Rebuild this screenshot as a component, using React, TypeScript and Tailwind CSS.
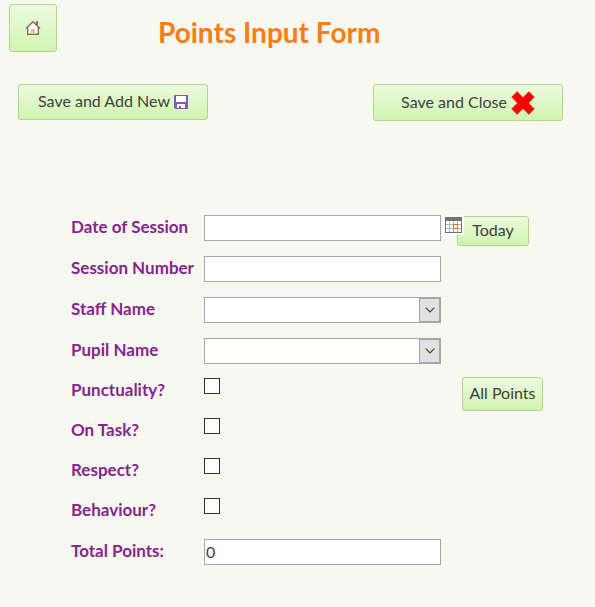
import { useState } from 'react';
import type { ReactNode } from 'react';

const buttonStyle =
  'flex shrink-0 items-center justify-center rounded-[3px] border border-[#acd888] bg-linear-to-b from-[#ecfadf] to-[#d0f4af] text-base leading-5 text-[#404040]';
const boxStyle =
  'h-[26px] w-[237px] shrink-0 border border-[#a6a6a6] bg-white text-base leading-5 text-[#404040] outline-none';

function HomeIcon() {
  return (
    <svg width="16" height="16" viewBox="0 0 16 16" aria-hidden="true">
      <path d="M11 1h2v4h-2z" fill="#d65532" />
      <path d="M3 7.5 8 2.5l5 5V14H3z" fill="#fff" />
      <path d="M1 8.5 8 1.8l7 6.7M2.7 7.5v6.8h10.6V7.5" fill="none" stroke="#737373" strokeWidth="1.4" />
      <path d="M6 9h4v5H6z" fill="#eac282" />
    </svg>
  );
}

function DiskIcon() {
  return (
    <svg width="14" height="14" viewBox="0 0 14 14" shapeRendering="crispEdges" aria-hidden="true">
      <path d="M0 0h14v14H1l-1-1z" fill="#8a57b0" />
      <path d="M2 1h10v6H2zM3 9h8v4H7v-2H5v2H3z" fill="#fff" />
    </svg>
  );
}

function CrossIcon() {
  return (
    <svg width="24" height="24" viewBox="0 0 24 24" aria-hidden="true">
      <path
        d="M6.2.6 12 6.5 17.8.6l5.6 5.5-5.8 5.9 5.8 5.9-5.6 5.5-5.8-5.9-5.8 5.9-5.6-5.5L6.4 12 .6 6.1z"
        fill="#f00"
        stroke="#c83a20"
        strokeWidth=".5"
      />
    </svg>
  );
}

function CalendarIcon() {
  return (
    <svg width="17" height="16" viewBox="0 0 17 16" shapeRendering="crispEdges" aria-hidden="true">
      <rect width="17" height="16" fill="#737373" />
      <rect x="1" y="4" width="15" height="11" fill="#fff" />
      <path d="M4 4h1v11h-1zM8 4h1v11h-1zM12 4h1v11h-1zM1 7h15v1h-15zM1 11h15v1h-15z" fill="#b5b5b5" />
      <rect x="8" y="7" width="5" height="5" fill="#e66c0c" />
      <rect x="9" y="8" width="3" height="3" fill="#fff" />
    </svg>
  );
}

function Row({ id, label, children }: { id: string; label: string; children: ReactNode }) {
  return (
    <div className="flex h-[26px] items-start">
      <label htmlFor={id} className="w-[133px] shrink-0 pt-0.5 text-[17px] leading-5 font-bold whitespace-nowrap text-[#882490]">
        {label}
      </label>
      {children}
    </div>
  );
}

function Dropdown({ id }: { id: string }) {
  return (
    <div className="relative flex">
      <select id={id} className={`${boxStyle} appearance-none pr-6 pl-px`}>
        <option value="" />
      </select>
      <span className="pointer-events-none absolute inset-y-0 right-0 flex w-[22px] items-center justify-center border-2 border-l border-[#a6a6a6] bg-[#e1e1e1]">
        <svg width="10" height="6" viewBox="0 0 10 6" fill="none" stroke="#404040" strokeWidth="1.2" aria-hidden="true">
          <path d="M.7.7 5 5 9.3.7" />
        </svg>
      </span>
    </div>
  );
}

const criteria = [
  { id: 'punctuality', label: 'Punctuality?' },
  { id: 'task', label: 'On Task?' },
  { id: 'respect', label: 'Respect?' },
  { id: 'behaviour', label: 'Behaviour?' },
];

export default function App() {
  const [checked, setChecked] = useState<string[]>([]);
  const [date, setDate] = useState('');
  const toggle = (id: string) =>
    setChecked((now) => (now.includes(id) ? now.filter((item) => item !== id) : [...now, id]));
  const setAll = () => setChecked(criteria.map((item) => item.id));
  const setToday = () => setDate(new Date().toLocaleDateString('en-GB'));

  return (
    <main className="min-h-screen bg-[#f7f8f0] pt-1 pb-10 font-['Lato',sans-serif]">
      <header className="flex items-start pl-[9px]">
        <button type="button" aria-label="Home" className={`${buttonStyle} size-12`}>
          <HomeIcon />
        </button>
        <h1 className="ml-[101px] pt-3 text-[28px] leading-8 font-bold whitespace-nowrap text-[#f97d16]">
          Points Input Form
        </h1>
      </header>

      <div className="mt-8 flex items-start justify-between pr-8 pl-[18px]">
        <button type="button" className={`${buttonStyle} h-9 w-[190px] gap-1`}>
          <span className="pb-0.5">Save and Add New</span> <DiskIcon />
        </button>
        <button type="button" className={`${buttonStyle} h-[37px] w-[190px] gap-1`}>
          <span className="pb-0.5">Save and Close</span> <CrossIcon />
        </button>
      </div>

      <form className="mt-[94px] pl-[71px]" onSubmit={(event) => event.preventDefault()}>
        <div className="flex flex-col gap-[15px]">
          <Row id="date" label="Date of Session">
            <input
              id="date"
              type="text"
              value={date}
              onChange={(event) => setDate(event.target.value)}
              className={`${boxStyle} px-px`}
            />
            <button type="button" aria-label="Choose date" className="z-10 ml-0.5 shrink-0 bg-white p-0.5">
              <CalendarIcon />
            </button>
            <button type="button" onClick={setToday} className={`${buttonStyle} mt-px -ml-[7px] h-[30px] w-[72px] pb-0.5`}>
              Today
            </button>
          </Row>
          <Row id="session" label="Session Number">
            <input id="session" type="text" className={`${boxStyle} px-px`} />
          </Row>
          <Row id="staff" label="Staff Name">
            <Dropdown id="staff" />
          </Row>
          <Row id="pupil" label="Pupil Name">
            <Dropdown id="pupil" />
          </Row>
        </div>

        <div className="mt-[14px] mb-[15px] flex flex-col gap-[14px]">
          {criteria.map(({ id, label }) => (
            <Row key={id} id={id} label={label}>
              <input
                id={id}
                type="checkbox"
                checked={checked.includes(id)}
                onChange={() => toggle(id)}
                className="size-4 shrink-0 appearance-none border border-[#303030] bg-white checked:bg-[#404040]"
              />
              {id === 'punctuality' && (
                <button type="button" onClick={setAll} className={`${buttonStyle} -mt-px ml-[242px] h-[34px] w-[81px] pb-0.5`}>
                  All Points
                </button>
              )}
            </Row>
          ))}
        </div>

        <Row id="total" label="Total Points:">
          <input id="total" type="text" readOnly value={checked.length} className={`${boxStyle} px-px pb-0.5`} />
        </Row>
      </form>
    </main>
  );
}
